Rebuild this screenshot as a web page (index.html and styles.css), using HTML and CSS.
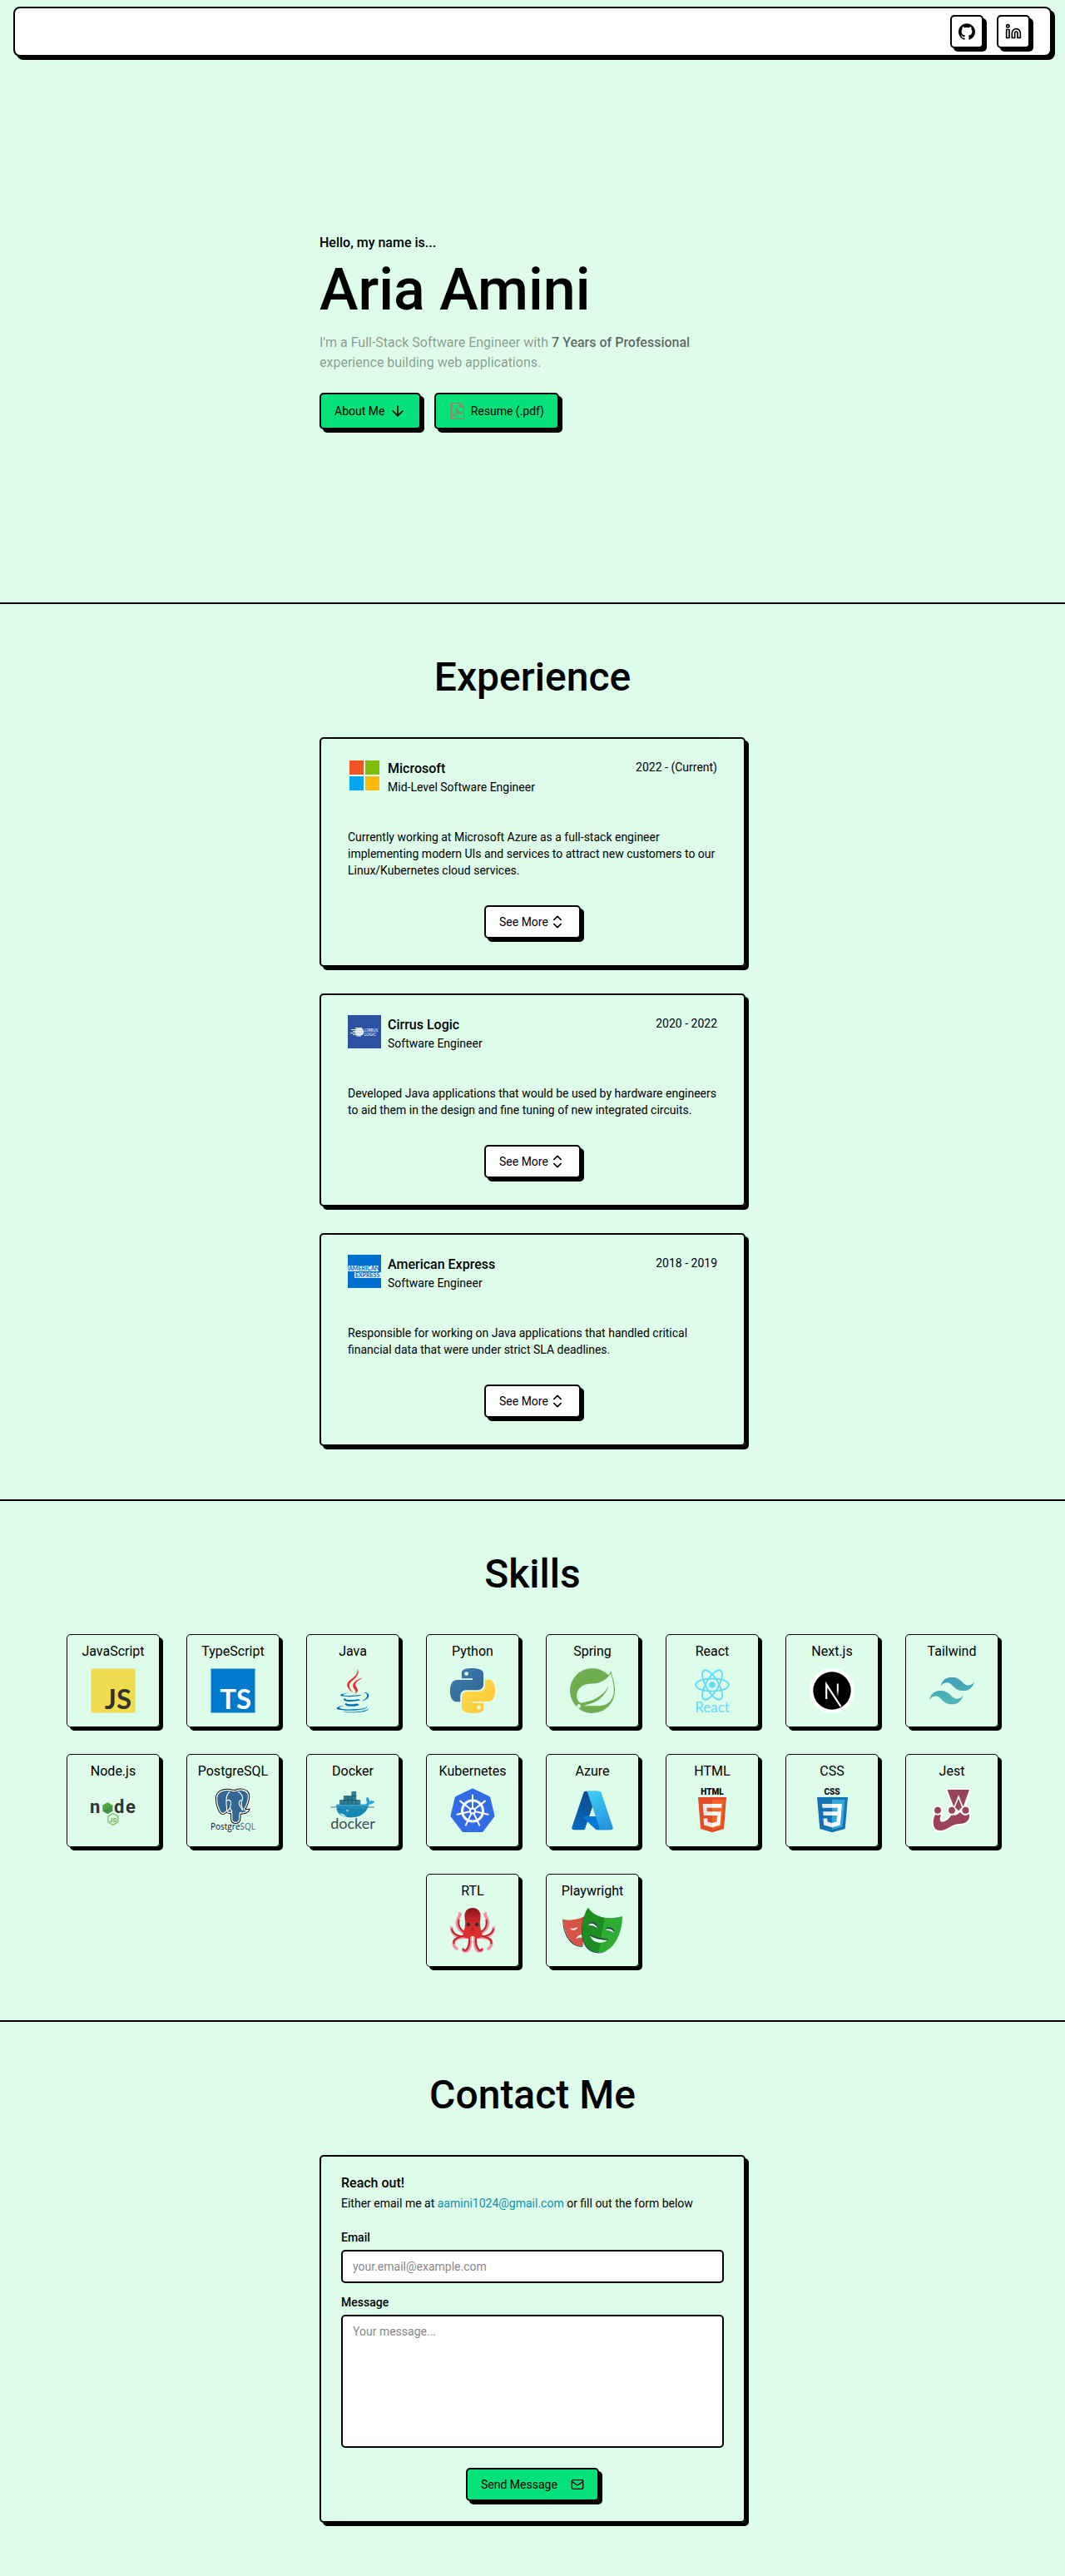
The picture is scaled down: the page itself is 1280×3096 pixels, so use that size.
FILE: index.html
```html
<!DOCTYPE html>
<html lang="en">
<head>
<meta charset="utf-8">
<meta name="viewport" content="width=device-width, initial-scale=1">
<title>Aria Amini</title>
<link rel="stylesheet" href="styles.css">
</head>
<body>
<header class="site-header">
  <nav class="navbar" aria-label="Social links">
    <a class="icon-link" href="https://github.com" aria-label="GitHub">
      <svg class="icon" viewBox="0 0 24 24" fill="#000"><path d="M12 .297c-6.63 0-12 5.373-12 12 0 5.303 3.438 9.8 8.205 11.385.6.113.82-.258.82-.577 0-.285-.01-1.04-.015-2.04-3.338.724-4.042-1.61-4.042-1.61C4.422 18.07 3.633 17.7 3.633 17.7c-1.087-.744.084-.729.084-.729 1.205.084 1.838 1.236 1.838 1.236 1.07 1.835 2.809 1.305 3.495.998.108-.776.417-1.305.76-1.605-2.665-.3-5.466-1.332-5.466-5.93 0-1.31.465-2.38 1.235-3.22-.135-.303-.54-1.523.105-3.176 0 0 1.005-.322 3.3 1.23.96-.267 1.98-.399 3-.405 1.02.006 2.04.138 3 .405 2.28-1.552 3.285-1.23 3.285-1.23.645 1.653.24 2.873.12 3.176.765.84 1.23 1.91 1.23 3.22 0 4.61-2.805 5.625-5.475 5.92.42.36.81 1.096.81 2.22 0 1.606-.015 2.896-.015 3.286 0 .315.21.69.825.57C20.565 22.092 24 17.592 24 12.297c0-6.627-5.373-12-12-12"/></svg>
    </a>
    <a class="icon-link" href="https://www.linkedin.com" aria-label="LinkedIn">
      <svg class="icon line-icon" viewBox="0 0 24 24"><path d="M16 8a6 6 0 0 1 6 6v7h-4v-7a2 2 0 0 0-4 0v7h-4v-7a6 6 0 0 1 6-6z"/><rect x="2" y="9" width="4" height="12"/><circle cx="4" cy="4" r="2"/></svg>
    </a>
  </nav>
</header>

<main>
  <section class="hero">
    <div class="column">
      <p class="hello">Hello, my name is...</p>
      <h1 class="name">Aria Amini</h1>
      <p class="tagline">I'm a Full-Stack Software Engineer with <strong>7 Years of Professional</strong> experience building web applications.</p>
      <div class="actions">
        <a class="button button-green about" href="#experience">About Me
          <svg class="icon line-icon" viewBox="0 0 24 24"><path d="M12 5v14M19 12l-7 7-7-7"/></svg>
        </a>
        <a class="button button-green resume" href="#resume">
          <svg class="icon" viewBox="0 0 20 20" fill="none" stroke="#b8705c"><path d="M2.5.5h10.500l4.500 4.500v14.500h-15zM13 .5v4.500h4.500" stroke-width="1.200"/><path d="M5 16c2-1 5-5 4.500-9 0-1.500-1.500-1-1 .5.5 2.500 3 5.500 6 5.500 1.500-.3.500-1.200-1-1-3 .2-5.500 1-8 2.800-1 .8-1 1.600-.5 1.200z" stroke-width="1.200"/></svg>
          Resume (.pdf)
        </a>
      </div>
    </div>
  </section>

  <section class="section" id="experience">
    <h2 class="section-title">Experience</h2>
    <div class="column jobs">
      <article class="card job">
        <div class="job-head">
          <svg class="job-logo" viewBox="0 0 40 40" role="img" aria-label="Microsoft logo"><path fill="#f35325" d="M2 2h17v17H2z"/><path fill="#81bc06" d="M21 2h17v17H21z"/><path fill="#05a6f0" d="M2 21h17v17H2z"/><path fill="#ffba08" d="M21 21h17v17H21z"/></svg>
          <div class="job-name"><h3>Microsoft</h3><p>Mid-Level Software Engineer</p></div>
          <p class="job-dates">2022 - (Current)</p>
        </div>
        <p class="job-text">Currently working at Microsoft Azure as a full-stack engineer implementing modern UIs and services to attract new customers to our Linux/Kubernetes cloud services.</p>
        <button class="button button-white" type="button">See More
          <svg class="icon line-icon" viewBox="0 0 24 24"><path d="m7 15 5 5 5-5M7 9l5-5 5 5"/></svg>
        </button>
      </article>
      <article class="card job">
        <div class="job-head">
          <svg class="job-logo" viewBox="0 0 40 40" role="img" aria-label="Cirrus Logic logo"><path fill="#2e52a3" d="M0 0h40v40H0z"/><g stroke="#fff" stroke-width="1.100" opacity=".9"><path d="M9 15.500h8M4 17.500h14M6 19.500h13M3 21.500h16M6 23.500h12M10 25h6"/></g><ellipse cx="14" cy="20" rx="5.500" ry="5" fill="#fff" opacity=".75"/><g class="logo-text" fill="#fff" font-size="5" font-style="italic"><text x="20" y="20">CIRRUS</text><text x="20" y="25">LOGIC</text></g></svg>
          <div class="job-name"><h3>Cirrus Logic</h3><p>Software Engineer</p></div>
          <p class="job-dates">2020 - 2022</p>
        </div>
        <p class="job-text">Developed Java applications that would be used by hardware engineers to aid them in the design and fine tuning of new integrated circuits.</p>
        <button class="button button-white" type="button">See More
          <svg class="icon line-icon" viewBox="0 0 24 24"><path d="m7 15 5 5 5-5M7 9l5-5 5 5"/></svg>
        </button>
      </article>
      <article class="card job">
        <div class="job-head">
          <svg class="job-logo" viewBox="0 0 40 40" role="img" aria-label="American Express logo"><path fill="#016fd0" d="M0 0h40v40H0z"/><path fill="#d9ebfa" d="M1 13h36v7H0zM8 21h32v7H8z"/><g class="logo-text" fill="#016fd0" font-weight="700" font-size="7"><text x="1" y="19">AMERICAN</text><text x="9" y="27">EXPRESS</text></g></svg>
          <div class="job-name"><h3>American Express</h3><p>Software Engineer</p></div>
          <p class="job-dates">2018 - 2019</p>
        </div>
        <p class="job-text">Responsible for working on Java applications that handled critical financial data that were under strict SLA deadlines.</p>
        <button class="button button-white" type="button">See More
          <svg class="icon line-icon" viewBox="0 0 24 24"><path d="m7 15 5 5 5-5M7 9l5-5 5 5"/></svg>
        </button>
      </article>
    </div>
  </section>

  <section class="section">
    <h2 class="section-title">Skills</h2>
    <ul class="skills">
      <li class="skill"><span>JavaScript</span>
        <svg viewBox="0 0 54 54"><path fill="#f0db4f" d="M.5.5h53v53H.5z"/><text class="logo-mark" x="49" y="49" text-anchor="end" font-size="33" fill="#323330">JS</text></svg></li>
      <li class="skill"><span>TypeScript</span>
        <svg viewBox="0 0 54 54"><path fill="#007acc" d="M.5.5h53v53H.5z"/><text class="logo-mark" x="49" y="49" text-anchor="end" font-size="33" fill="#fff">TS</text></svg></li>
      <li class="skill"><span>Java</span>
        <svg viewBox="0 0 128 128"><path fill="#0074bd" d="M47.617 98.120c-19.192 5.362 11.677 16.439 36.115 5.969-4.003-1.556-6.874-3.351-6.874-3.351-10.897 2.060-15.952 2.222-25.844 1.092-8.164-.935-3.397-3.710-3.397-3.710zM80.806 87.660c-14.444 2.779-22.787 2.690-33.354 1.600-8.171-.845-2.822-4.805-2.822-4.805-21.137 7.016 11.767 14.977 41.309 6.336-3.140-1.106-5.133-3.131-5.133-3.131zM102.123 108.229s3.529 2.910-3.888 5.159c-14.102 4.272-58.706 5.560-71.095.171-4.450-1.938 3.899-4.625 6.526-5.192 2.739-.593 4.303-.485 4.303-.485-4.952-3.487-32.013 6.850-13.742 9.815 49.821 8.076 90.817-3.637 77.896-9.468zM85 77.896c2.395-1.634 5.703-3.053 5.703-3.053s-9.424 1.685-18.813 2.474c-11.494.964-23.823 1.154-30.012.326-14.652-1.959 8.033-7.348 8.033-7.348s-8.812-.596-19.644 4.644C17.455 81.134 61.958 83.958 85 77.896zM90.609 93.041c-.108.290-.468.616-.468.616 31.273-8.221 19.775-28.979 4.822-23.725-1.312.464-2 1.543-2 1.543s.829-.334 2.678-.720c7.559-1.575 18.389 10.119-5.032 22.286zM91.455 121.817c-19.187 3.612-42.854 3.191-56.887.874 0 0 2.874 2.380 17.646 3.331 22.476 1.437 57-.8 57.816-11.436.001 0-1.570 4.032-18.575 7.231z"/><path fill="#ea2d2e" d="M92.125 27.085c.001 0-42.731 10.669-22.323 34.187 6.024 6.935-1.580 13.170-1.580 13.170s15.289-7.891 8.269-17.777c-6.559-9.215-11.587-13.793 15.634-29.580zM64.181 70.069c-4.614-10.429-20.260-19.553.007-35.559C89.459 14.563 76.492 1.587 76.492 1.587c5.230 20.608-18.451 26.833-26.999 39.667-5.821 8.745 2.857 18.142 14.688 28.815z"/></svg></li>
      <li class="skill"><span>Python</span>
        <svg viewBox="0 0 24 24"><defs><linearGradient id="py1" x1="0" y1="0" x2="1" y2="1"><stop offset="0" stop-color="#3a80b8"/><stop offset="1" stop-color="#35608c"/></linearGradient><linearGradient id="py2" x1="0" y1="0" x2="1" y2="1"><stop offset="0" stop-color="#ffe052"/><stop offset="1" stop-color="#ffc331"/></linearGradient></defs><path fill="url(#py1)" d="M14.250.180l.9.200.730.260.590.300.450.320.340.340.250.340.160.330.100.300.040.260.020.200-.010.130V8.500l-.050.630-.130.550-.210.460-.260.380-.300.310-.330.250-.350.190-.350.140-.330.100-.300.070-.260.040-.210.020H8.770l-.690.050-.590.140-.500.220-.410.270-.330.320-.270.350-.200.360-.150.370-.100.350-.070.320-.040.270-.020.210v3.060H3.170l-.210-.030-.280-.070-.320-.120-.350-.180-.360-.260-.360-.360-.350-.460-.320-.590-.280-.730-.210-.880-.140-1.050-.050-1.230.060-1.220.160-1.040.240-.870.320-.710.360-.570.400-.440.420-.330.420-.240.400-.160.360-.100.320-.050.240-.010h.160l.060.010h8.160v-.830H6.180l-.010-2.750-.020-.370.050-.340.110-.310.170-.280.250-.260.310-.230.380-.200.440-.180.510-.150.580-.120.640-.100.710-.060.770-.040.840-.020 1.270.050z"/><path fill="url(#py2)" d="M21.040 6.110l.280.060.320.120.350.180.360.270.360.350.350.470.320.590.280.730.210.880.140 1.040.050 1.230-.060 1.230-.160 1.040-.240.860-.320.710-.360.570-.400.450-.420.330-.420.240-.400.160-.360.090-.320.050-.240.020-.160-.010h-8.220v.820h5.840l.010 2.760.020.360-.050.340-.110.310-.170.290-.250.250-.310.240-.380.200-.440.170-.510.150-.580.130-.640.090-.710.070-.770.040-.840.010-1.270-.040-1.070-.140-.900-.200-.730-.250-.590-.300-.450-.330-.340-.340-.250-.340-.160-.330-.100-.300-.040-.250-.020-.200.010-.130v-5.340l.050-.640.130-.540.210-.460.260-.380.300-.320.330-.240.350-.200.350-.140.330-.100.300-.060.260-.040.210-.020.130-.010h5.840l.690-.050.590-.140.500-.210.410-.280.330-.320.270-.350.200-.360.150-.360.100-.350.070-.320.040-.280.020-.210V6.070h2.090z"/><circle cx="8.700" cy="2.900" r="1.050" fill="#defcea"/><circle cx="15.300" cy="21.100" r="1.050" fill="#defcea"/></svg></li>
      <li class="skill"><span>Spring</span>
        <svg viewBox="0 0 24 24"><path fill="#70ad51" d="M21.854 1.416a10.450 10.450 0 0 1-1.284 2.247A11.967 11.967 0 1 0 3.852 20.776l.444.395a11.954 11.954 0 0 0 19.632-8.297c.346-3.013-.568-6.865-2.074-11.458zM5.580 20.875a1.017 1.017 0 1 1-.148-1.432 1.040 1.040 0 0 1 .148 1.432zm16.199-3.581c-2.938 3.926-9.260 2.593-13.285 2.790 0 0-.716.049-1.432.148 0 0 .272-.123.617-.247 2.840-.988 4.173-1.185 5.902-2.074 3.235-1.654 6.470-5.284 7.112-9.038-1.235 3.605-4.988 6.717-8.396 7.976-2.346.864-6.569 1.704-6.569 1.704l-.173-.099c-2.864-1.408-2.963-7.630 2.272-9.631 2.297-.889 4.470-.395 6.964-.988 2.642-.617 5.704-2.593 6.939-5.186 1.383 4.173 3.062 10.643.049 14.643z"/></svg></li>
      <li class="skill"><span>React</span>
        <svg viewBox="0 0 54 54"><g fill="none" stroke="#61dafb" stroke-width="1.800"><ellipse cx="27" cy="20" rx="20" ry="7.600"/><ellipse cx="27" cy="20" rx="20" ry="7.600" transform="rotate(60 27 20)"/><ellipse cx="27" cy="20" rx="20" ry="7.600" transform="rotate(120 27 20)"/></g><circle cx="27" cy="20" r="3.800" fill="#61dafb"/><text class="logo-text" x="27" y="53" text-anchor="middle" font-size="17" fill="#61dafb">React</text></svg></li>
      <li class="skill"><span>Next.js</span>
        <svg viewBox="0 0 54 54"><defs><linearGradient id="nx" x1="0" y1="0" x2="0" y2="1"><stop offset=".5" stop-color="#fff"/><stop offset="1" stop-color="#fff" stop-opacity="0"/></linearGradient></defs><circle cx="27" cy="27" r="27" fill="#fff"/><circle cx="27" cy="27" r="22.700"/><path d="M20.200 37V19.500L37.500 46" fill="none" stroke="#fff" stroke-width="2.200"/><path d="M32.800 18.500h2v16h-2z" fill="url(#nx)"/></svg></li>
      <li class="skill"><span>Tailwind</span>
        <svg viewBox="0 -10.800 54 54"><defs><linearGradient id="tw" x1="0" y1="0" x2="0" y2="1"><stop offset="0" stop-color="#3f9fb8"/><stop offset="1" stop-color="#4fb8b4"/></linearGradient></defs><path fill="url(#tw)" d="M27 0c-7.200 0-11.700 3.600-13.500 10.800 2.700-3.600 5.850-4.950 9.450-4.050 2.054.513 3.522 2.004 5.147 3.653C30.744 13.090 33.808 16.200 40.500 16.200c7.200 0 11.700-3.600 13.500-10.800-2.700 3.600-5.850 4.950-9.450 4.050-2.054-.513-3.522-2.004-5.147-3.653C36.756 3.110 33.692 0 27 0zM13.500 16.200C6.300 16.200 1.800 19.800 0 27c2.700-3.600 5.850-4.950 9.450-4.050 2.054.514 3.522 2.004 5.147 3.653C17.244 29.290 20.308 32.400 27 32.400c7.200 0 11.700-3.600 13.500-10.800-2.700 3.600-5.850 4.950-9.450 4.050-2.054-.513-3.522-2.004-5.147-3.653C23.256 19.310 20.192 16.200 13.500 16.200z"/></svg></li>
      <li class="skill"><span>Node.js</span>
        <svg viewBox="0 0 54 54"><g class="logo-round" font-size="22" fill="#333"><text x="-1" y="30">n</text><text x="28" y="30">d</text><text x="42" y="30">e</text></g><path fill="#4fa446" d="M20.300 17.300l6 3.400v7l-6 3.400-6-3.400v-7z"/><path fill="#3f873f" d="M14.300 27.700l6 3.400 6-3.400v-7z" opacity=".6"/><path d="M26.800 30.500l6 3.400v7l-6 3.400-6-3.400v-7z" fill="none" stroke="#6cbf4f" stroke-width="1.200"/><text class="logo-round" x="26.800" y="40.500" text-anchor="middle" font-size="8" fill="#5fb045">JS</text></svg></li>
      <li class="skill"><span>PostgreSQL</span>
        <svg viewBox="0 0 54 54"><defs><path id="pg" d="M27 3.500C21 1.500 8 1.500 7.500 12c-.3 8 4 18.500 7 18.500 2.500 0 3.500-2.500 5-3 1 2.500 4.500 2.500 6 1 .3 3-.2 6 .3 9.500.7 4.500 8 4.500 8.800 0 .5-4 0-6.500 1-8.500 4 1 9-.8 9.700-3-2 .3-4 .3-5-.5 4-6 7-16 4-20.500-3-4-10-4-14-2-1-.3-2-.3-3.300 0z"/></defs><use href="#pg" fill="none" stroke="#000" stroke-width="3.200"/><use href="#pg" fill="#336791" stroke="#fff" stroke-width="1.300"/><path d="M23 4.500c-5 4-4 9-4 13s1 6 .5 9.500c3 1 3-2 4.500-4M33 4c5 3 7 8 5 11-3-1-4 1-3.500 4 1 4 3 5 4 8M19 15c4-1.500 6 0 5.500 4-.3 2-1 3-.5 6l2 3.500M37 15.500c1 4-1 6 2 10" fill="none" stroke="#fff" stroke-width="1.100"/><text class="logo-sans" x="27" y="50" text-anchor="middle" font-size="10" fill="#111">Postgre<tspan fill="#336791">SQL</tspan></text></svg></li>
      <li class="skill"><span>Docker</span>
        <svg viewBox="0 0 54 54"><path fill="#27a5d6" d="M7.300 19.500h33.200c3 0 4-1.500 3.200-3.500-1-2-1-4 .8-5.500 2 1.500 2.700 3.500 2.500 5.200 2-.8 4.500-.8 6.300.5-1.300 2.500-3.800 3.300-6.300 3.300C43 29 36 35.300 25 35.300 13 35.300 6.500 31 7.300 19.500z"/><path fill="#1488b3" d="M7.500 24h37.300C41 31.500 34.500 35.300 25 35.300 14 35.300 8.500 31.500 7.500 24z"/><path fill="#bfe3ee" d="M11 30.500c4-.5 6 1.500 9 4.500-4-.5-7-2-9-4.500z"/><path fill="#2b7f95" stroke="#1c4b58" stroke-width=".6" d="M11.500 14.500h24.300v5H11.500zM16.300 9.500h14.500v5H16.300zM25.800 4.500h5v5h-5z"/><path stroke="#1c4b58" stroke-width=".6" d="M16.300 14.500v5M21.200 9.500v10M26 9.500v10M30.800 14.500v5"/><path d="M.5 23h5l2-1.200 2.500 1.200h3l2.500-1.200L18 23h3l2.500-1.200L26 23h3l2.500-1.200L34 23h3l2.500-1.200L42 23h11" fill="none" stroke="#3d6570" stroke-width=".9"/><circle cx="20.500" cy="27" r="1.300" fill="#cfeaf2"/><circle cx="20.500" cy="27" r=".6" fill="#1c4b58"/><text class="logo-text" x="27" y="49" text-anchor="middle" font-size="18" fill="#394d54">docker</text></svg></li>
      <li class="skill"><span>Kubernetes</span>
        <svg viewBox="0 0 54 54"><defs><path id="spoke" d="M27 24V8.500" stroke="#fff" stroke-width="2" stroke-linecap="round"/></defs><path fill="#326ce5" stroke="#326ce5" stroke-width="4" stroke-linejoin="round" d="M27 2.500 46.300 11.800 51.500 33.200 38 51H16L2.500 33.200 7.700 11.800z"/><circle cx="27" cy="27.500" r="12.500" fill="none" stroke="#fff" stroke-width="3"/><use href="#spoke"/><use href="#spoke" transform="rotate(51.430 27 27.500)"/><use href="#spoke" transform="rotate(102.860 27 27.500)"/><use href="#spoke" transform="rotate(154.290 27 27.500)"/><use href="#spoke" transform="rotate(205.710 27 27.500)"/><use href="#spoke" transform="rotate(257.140 27 27.500)"/><use href="#spoke" transform="rotate(308.570 27 27.500)"/><circle cx="27" cy="27.500" r="3" fill="#326ce5" stroke="#fff" stroke-width="2"/></svg></li>
      <li class="skill"><span>Azure</span>
        <svg viewBox="0 0 96 96"><defs><linearGradient id="az1" x1=".6" y1="0" x2=".3" y2="1"><stop offset="0" stop-color="#114a8b"/><stop offset="1" stop-color="#0669bc"/></linearGradient><linearGradient id="az2" x1=".3" y1="0" x2=".7" y2="1"><stop offset="0" stop-color="#3ccbf4"/><stop offset="1" stop-color="#2892df"/></linearGradient></defs><path fill="url(#az1)" d="M33.338 6.544h26.038l-27.030 80.087a4.152 4.152 0 0 1-3.933 2.824H8.149a4.145 4.145 0 0 1-3.928-5.470L29.404 9.368a4.152 4.152 0 0 1 3.934-2.825z"/><path fill="#0078d4" d="M71.175 60.261h-41.290a1.911 1.911 0 0 0-1.305 3.309l26.532 24.764a4.171 4.171 0 0 0 2.846 1.121h23.380z"/><path fill="url(#az2)" d="M66.595 9.364a4.145 4.145 0 0 0-3.928-2.820H33.648a4.146 4.146 0 0 1 3.928 2.820l25.184 74.620a4.146 4.146 0 0 1-3.928 5.472h29.020a4.146 4.146 0 0 0 3.927-5.472z"/></svg></li>
      <li class="skill"><span>HTML</span>
        <svg viewBox="0 0 54 54"><text class="logo-black" x="27" y="8" text-anchor="middle" font-size="10">HTML</text><path fill="#e44d26" d="M10 11h34l-3 38-14 4.300L13 49z"/><path fill="#f16529" d="M27 14h14l-2.700 32.500L27 50z"/><path fill="#ebebeb" d="M27 19H15.500l1.300 14H27v-4.700h-6.200l-.4-4.600H27zM27 42l-5.500-1.500-.3-4h-4.700l.6 8L27 47.300z"/><path fill="#fff" d="M27 19h11.500l-.4 4.700H27zM27 28.300h10.700l-1.400 16.200L27 47.300V42l5.500-1.500.6-7.500H27z"/></svg></li>
      <li class="skill"><span>CSS</span>
        <svg viewBox="0 0 54 54"><text class="logo-black" x="27" y="8" text-anchor="middle" font-size="10" fill="#131313">CSS</text><path fill="#1572b6" d="M9 11h37l-3.300 38L27 53.300 12.300 49z"/><path fill="#33a9dc" d="M27 14h15.500l-3 32.500L27 50z"/><path fill="#ebebeb" d="M27 19H15l.4 4.700H27zM27 28.300H16.200l.4 4.700H27zM27 42l-5.500-1.500-.3-4h-4.700l.6 8L27 47.300z"/><path fill="#fff" d="M27 19h12l-2.200 25.500L27 47.300V42l5.500-1.500.6-7.500H27v-4.700h6.500l.4-4.600H27z"/></svg></li>
      <li class="skill"><span>Jest</span>
        <svg viewBox="0 0 54 54"><g fill="#99425b" stroke="#fff" stroke-width="4" paint-order="stroke" stroke-linejoin="round"><path d="M7 32C3 40 4 51 13 51c9.500 0 12-7.500 23-8 8 0 13-4 12-12-4 3-8 2-11-2-3 3.500-7 4.500-10.500 3-3 6-8 9-12 8.500-2-1-2.500-4-.5-8.500z"/><path d="M21.500 2H48l-7.500 21h-11z"/><circle cx="10" cy="26.700" r="4"/><circle cx="27" cy="26.700" r="4"/><circle cx="43.500" cy="26.700" r="4"/></g><path d="M35 10.500 30 23l5 5.500 5-5.500z" fill="#99425b" stroke="#fff" stroke-width="1.600"/></svg></li>
      <li class="skill"><span>RTL</span>
        <svg viewBox="0 0 54 54"><defs><linearGradient id="oc" x1="0" y1="0" x2="0" y2="1"><stop offset="0" stop-color="#8a1418"/><stop offset=".6" stop-color="#dd2e2e"/></linearGradient><g id="arms" fill="none" stroke-linecap="round"><g stroke="#f191a4" stroke-width="3.600"><path d="M20 32C12 29 6.500 22 9 14c1.500-4 4.500-6 2.500-7M22 34C13 38 2.500 34 1.500 24M22 35C14 34 2 37 4.500 44.500 5.500 48 7 48.500 8 49M24 35c1 8 .5 13-3 16.500-2.500 1.500-5.500.5-5.500-2"/></g><g stroke="#c9222b" stroke-width="2.200"><path d="M21 31C13 28 9 22 10.500 14.500M21 33C13 36 4.500 33 2 26M21 34.500C14 33.500 3 36 4.500 42.500M23 35c.5 8 0 12-3.500 15.500-1.500 1-3 .5-3.500-.5"/></g></g></defs><use href="#arms"/><use href="#arms" transform="matrix(-1 0 0 1 54 0)"/><path fill="url(#oc)" d="M27 0c7 0 10 5 9.500 11-.3 4-1 6-.5 9.500 0 5 2.500 8 2.500 12C38 37 31 38 30 35c-1-1.500-5-1.500-6 0-1 3-8 2-8.500-2.500 0-4 2.500-7 2.500-12 .5-3.500-.2-5.500-.5-9.500C17 5 20 0 27 0z"/><circle cx="21.700" cy="20" r="2.200" fill="#2b2b33"/><circle cx="32.300" cy="20" r="2.200" fill="#2b2b33"/><ellipse cx="27" cy="26" rx="2" ry="3" fill="#c4262b"/></svg></li>
      <li class="skill"><span>Playwright</span>
        <svg class="wide" viewBox="0 0 72 54"><path fill="#2d4552" d="M.3 13.500 1 14c.5 17 9 32 24 32l-1 .8C9 47.500 0 31 .3 13.500z"/><path fill="#d65348" d="M.8 13.800C9 16 18 14 27 10l-3 36c-12 1-22-13-23.200-32.200z"/><path fill="#bf3f36" d="M23 12l5-2-3 36-2-.5z" opacity=".5"/><path fill="#defcea" d="M9 24.500c3 1 6 .5 9-1.500 0 3.500-6.500 5.500-9 1.500zM16 37.500c1-3 4-5 8-6l-.5 4.500c-3-.5-5.500 0-7.500 1.500z"/><path fill="#2d4552" d="M30 1c-6 9-9 32-1 43 8 11 18 11 25 7-6 5-18 5-25-3-10-12-6-36 1-47z"/><path fill="#2ead33" d="M31 0c4 7 13 11.500 23 12 7 .5 13-.5 18-2 0 22-11 42-26 43.500C32 54 22 42 24 24c1-12 4-21 7-24z"/><path fill="#1d8d22" d="M31 0c4 6.500 11 10.500 19.500 11.800L43.500 53.500C30 52 22.500 41 24 24c1-12 4-21 7-24z"/><path fill="#2d4552" d="M31 21c2-6 10-5.500 11.500 3.500zM51 26.500c3-5.500 11-4 12 4z"/><path fill="#defcea" d="M31 21c3-4 8-2.500 11.500 3.500C39 22 35 21 31 21zM51 26.500c4-2.500 9-1 12 4-4-2.500-8-3.500-12-4z"/><path fill="#defcea" d="M33 33c5 4 14 6 21 5.500C49 44 36 43 33 33z"/><path fill="none" stroke="#2d4552" stroke-width="1.600" d="M33 32.500c6 3.500 13 5 21.500 5.500"/></svg></li>
    </ul>
  </section>

  <section class="section contact" id="contact">
    <h2 class="section-title">Contact Me</h2>
    <div class="column">
      <form class="card contact-card">
        <div class="contact-head">
          <h3>Reach out!</h3>
          <p>Either email me at <a href="mailto:aamini1024@gmail.com">aamini1024@gmail.com</a> or fill out the form below</p>
        </div>
        <div class="field">
          <label for="email">Email</label>
          <input id="email" type="email" placeholder="your.email@example.com">
        </div>
        <div class="field">
          <label for="message">Message</label>
          <textarea id="message" placeholder="Your message..."></textarea>
        </div>
        <button class="button button-green send" type="submit">Send Message
          <svg class="icon-small line-icon" viewBox="0 0 24 24"><rect x="2" y="4" width="20" height="16" rx="2"/><path d="m22 7-8.970 5.700a1.940 1.940 0 0 1-2.060 0L2 7"/></svg>
        </button>
      </form>
    </div>
  </section>
</main>
</body>
</html>
```
FILE: styles.css
```css
*, *::before, *::after { box-sizing: border-box; }

body, h1, h2, h3, p, ul { margin: 0; padding: 0; }

body {
  background: #defcea;
  color: #000;
  font-family: Roboto, "Liberation Sans", sans-serif;
  font-size: 14px;
  line-height: 20px;
}

h1, h2, h3 { font-weight: 500; }

.icon { width: 20px; height: 20px; flex: none; }
.icon-small { width: 16px; height: 16px; flex: none; }
.line-icon {
  fill: none;
  stroke: #000;
  stroke-width: 2;
  stroke-linecap: round;
  stroke-linejoin: round;
}

/* Navigation */
.site-header { padding: 8px 16px 4px; }

.navbar {
  display: flex;
  justify-content: flex-end;
  gap: 16px;
  padding: 8px 24px;
  background: #fff;
  border: 2px solid #000;
  border-radius: 8px;
  box-shadow: 4px 4px 0 #000;
}

.icon-link {
  display: flex;
  align-items: center;
  justify-content: center;
  width: 40px;
  height: 40px;
  background: #fff;
  border: 2px solid #000;
  border-radius: 5px;
  box-shadow: 4px 4px 0 #000;
}

/* Shared pieces */
.column { max-width: 512px; margin: 0 auto; }

.section { padding: 64px 16px; border-bottom: 2px solid #000; }

.section-title {
  margin-bottom: 48px;
  font-size: 48px;
  line-height: 48px;
  text-align: center;
}

.card {
  border: 2px solid #000;
  border-radius: 5px;
  box-shadow: 4px 4px 0 #000;
}

.button {
  display: inline-flex;
  align-items: center;
  justify-content: space-between;
  height: 40px;
  padding: 0 16px;
  border: 2px solid #000;
  border-radius: 5px;
  box-shadow: 4px 4px 0 #000;
  color: #000;
  font: inherit;
  text-decoration: none;
  white-space: nowrap;
}
.button-green { background: #05e17a; }
.button-white { min-width: 116px; background: #fff; }

/* Hero */
.hero { padding: 208px 16px; border-bottom: 2px solid #000; }
.hello { margin-bottom: 8px; font-size: 16px; font-weight: 500; line-height: 24px; }
.name { margin-bottom: 16px; font-size: 70px; line-height: 72px; }
.tagline {
  max-width: 464px;
  margin-bottom: 24px;
  color: rgba(0, 0, 0, .4);
  font-size: 16px;
  line-height: 24px;
}
.tagline strong { color: rgba(0, 0, 0, .6); font-weight: 500; }
.actions { display: flex; gap: 16px; }
.actions .button { height: 44px; }
.about { min-width: 122px; }
.resume { min-width: 150px; }

/* Experience */
.jobs { display: flex; flex-direction: column; gap: 32px; }
.job {
  display: flex;
  flex-direction: column;
  gap: 32px;
  padding: 24px 32px 32px;
}
.job-head { display: flex; gap: 8px; padding-bottom: 8px; }
.job-logo { width: 40px; height: 40px; flex: none; overflow: visible; }
.job-name { flex: 1; padding-top: 4px; }
.job-name h3 { margin-bottom: 4px; font-size: 16px; line-height: 16px; }
.job-dates { line-height: 20px; }
.job .button { align-self: center; }

/* Skills */
.skills {
  display: flex;
  flex-wrap: wrap;
  justify-content: center;
  gap: 32px;
  max-width: 1120px;
  margin: 0 auto;
  list-style: none;
}
.skill {
  display: flex;
  flex-direction: column;
  align-items: center;
  gap: 8px;
  width: 112px;
  height: 112px;
  padding-top: 8px;
  border: 1px solid #000;
  border-radius: 5px;
  box-shadow: 4px 4px 0 #000;
  font-size: 16px;
  line-height: 24px;
}
.skill svg { width: 54px; height: 54px; flex: none; overflow: visible; }
.skill .wide { width: 72px; }
.logo-text { font-family: Lato, sans-serif; }
.logo-mark { font-family: Lato, sans-serif; font-weight: 700; }
.logo-sans { font-family: "Open Sans", sans-serif; }
.logo-round { font-family: Roboto, sans-serif; font-weight: 700; }
.logo-black { font-family: Roboto, sans-serif; font-weight: 900; }

/* Contact */
.contact { border-bottom: 0; }
.contact-card {
  display: flex;
  flex-direction: column;
  padding: 24px;
}
.contact-head { margin-bottom: 24px; }
.contact-head h3 { margin-bottom: 6px; font-size: 16px; line-height: 16px; }
.contact-head a { color: #0891b2; text-decoration: none; }
.field {
  display: flex;
  flex-direction: column;
  gap: 8px;
  margin-bottom: 16px;
}
.field label { font-weight: 500; line-height: 14px; }
.field input,
.field textarea {
  width: 100%;
  height: 40px;
  padding: 8px 12px;
  background: #fff;
  border: 2px solid #000;
  border-radius: 5px;
  color: #000;
  font: inherit;
}
.field textarea { height: 160px; resize: none; }
.field ::placeholder { color: #888; }
.send { align-self: center; min-width: 160px; margin-top: 8px; }
```
